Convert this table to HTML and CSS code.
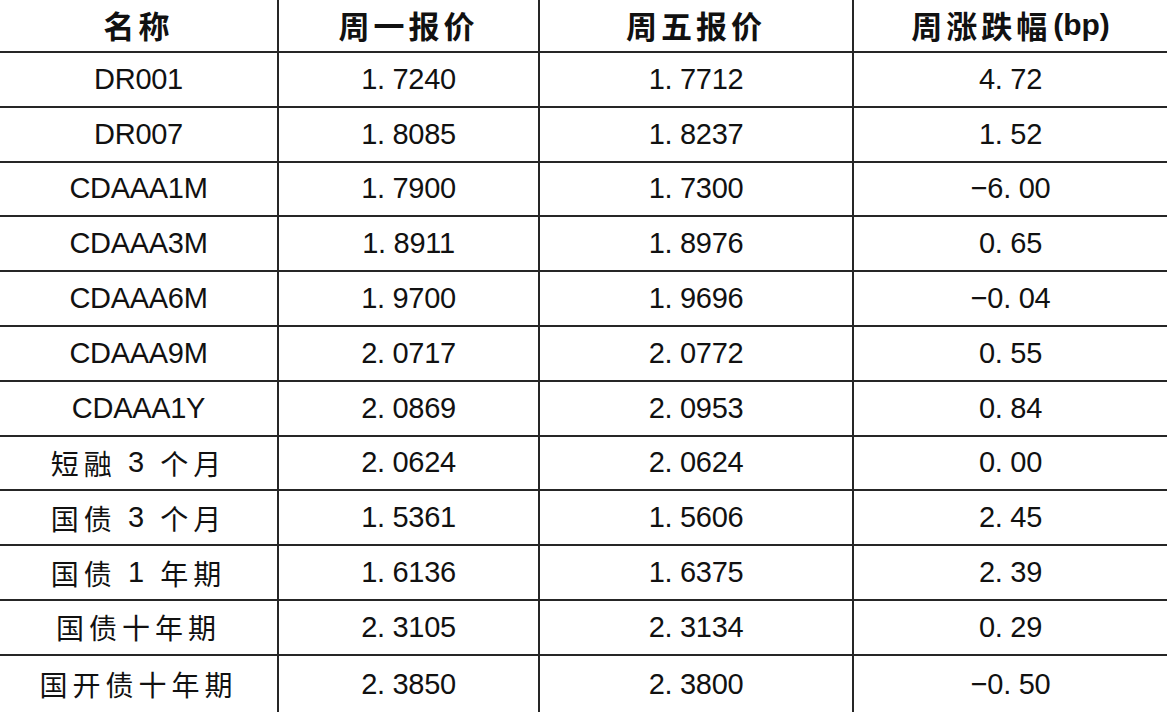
FILE: index.html
```html
<!DOCTYPE html>
<html lang="zh-CN">
<head>
<meta charset="utf-8">
<title>报价</title>
<link rel="stylesheet" href="styles.css">
</head>
<body>
<div class="table">
  <div class="cell head">名称</div>
  <div class="cell head">周一报价</div>
  <div class="cell head">周五报价</div>
  <div class="cell head last-col">周涨跌幅<span class="bp">(bp)</span></div>

  <div class="cell num">DR001</div><div class="cell num">1. 7240</div><div class="cell num">1. 7712</div><div class="cell num last-col">4. 72</div>
  <div class="cell num">DR007</div><div class="cell num">1. 8085</div><div class="cell num">1. 8237</div><div class="cell num last-col">1. 52</div>
  <div class="cell num">CDAAA1M</div><div class="cell num">1. 7900</div><div class="cell num">1. 7300</div><div class="cell num last-col">−6. 00</div>
  <div class="cell num">CDAAA3M</div><div class="cell num">1. 8911</div><div class="cell num">1. 8976</div><div class="cell num last-col">0. 65</div>
  <div class="cell num">CDAAA6M</div><div class="cell num">1. 9700</div><div class="cell num">1. 9696</div><div class="cell num last-col">−0. 04</div>
  <div class="cell num">CDAAA9M</div><div class="cell num">2. 0717</div><div class="cell num">2. 0772</div><div class="cell num last-col">0. 55</div>
  <div class="cell num">CDAAA1Y</div><div class="cell num">2. 0869</div><div class="cell num">2. 0953</div><div class="cell num last-col">0. 84</div>
  <div class="cell cn">短融 <span class="d">3</span> 个月</div><div class="cell num">2. 0624</div><div class="cell num">2. 0624</div><div class="cell num last-col">0. 00</div>
  <div class="cell cn">国债 <span class="d">3</span> 个月</div><div class="cell num">1. 5361</div><div class="cell num">1. 5606</div><div class="cell num last-col">2. 45</div>
  <div class="cell cn">国债 <span class="d">1</span> 年期</div><div class="cell num">1. 6136</div><div class="cell num">1. 6375</div><div class="cell num last-col">2. 39</div>
  <div class="cell cn">国债十年期</div><div class="cell num">2. 3105</div><div class="cell num">2. 3134</div><div class="cell num last-col">0. 29</div>
  <div class="cell cn last-row">国开债十年期</div><div class="cell num last-row">2. 3850</div><div class="cell num last-row">2. 3800</div><div class="cell num last-col last-row">−0. 50</div>
</div>
</body>
</html>
```

FILE: styles.css
```css
html, body {
  margin: 0;
  padding: 0;
  background: #ffffff;
}

.table {
  display: grid;
  width: 1167px;
  grid-template-columns: 279px 261px 314px 313px;
  grid-template-rows: 53px repeat(11, 54.8px) 57px;
  color: #111111;
}

.cell {
  box-sizing: border-box;
  border-right: 2px solid #262626;
  border-bottom: 2px solid #262626;
  display: flex;
  align-items: center;
  justify-content: center;
  white-space: pre;
}

.last-col {
  border-right: none;
}

.last-row {
  border-bottom: none;
}

.head {
  font-family: "Noto Sans CJK SC", sans-serif;
  font-weight: 700;
  font-size: 31px;
  letter-spacing: 4px;
  padding-bottom: 2px;
}

.bp {
  font-family: "Liberation Sans", sans-serif;
  font-weight: 700;
  font-size: 30px;
  letter-spacing: 0;
  margin-left: 2px;
}

.num {
  font-family: "Liberation Sans", sans-serif;
  font-size: 29px;
  letter-spacing: -0.3px;
}

.cn {
  font-family: "Noto Sans CJK SC", sans-serif;
  font-size: 28px;
  letter-spacing: 5px;
}

.cn .d {
  font-family: "Liberation Sans", sans-serif;
  font-size: 29px;
}
```
